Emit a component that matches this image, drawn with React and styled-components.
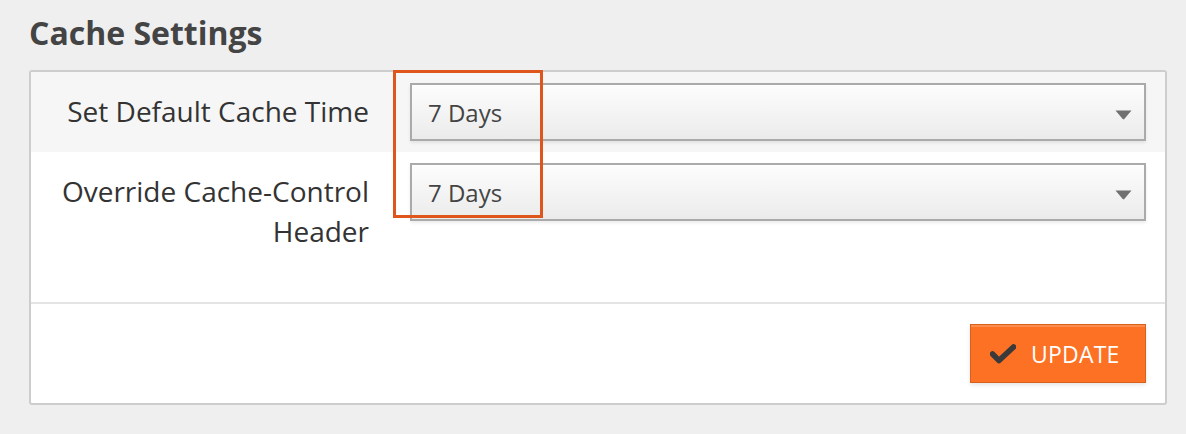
import React from "react";
import styled, { createGlobalStyle } from "styled-components";

const Global = createGlobalStyle`
  html, body { margin: 0; padding: 0; }
  body {
    background: #efefef;
    font-family: "Open Sans", "Liberation Sans", sans-serif;
    color: #333;
  }
`;

const Page = styled.div`
  position: relative;
  padding: 12px 19px 28px 29px;
`;

const Title = styled.h2`
  margin: 0 0 17px 0;
  font-size: 32px;
  font-weight: 700;
  line-height: 41px;
  color: #444;
`;

const Panel = styled.div`
  background: #fff;
  border: 2px solid #cdcdcd;
  border-radius: 3px;
`;

const Row = styled.div`
  display: flex;
  align-items: flex-start;
  padding-right: 19px;
  background: ${(p) => (p.$shaded ? "#f6f6f6" : "#fff")};
  padding-bottom: ${(p) => p.$extra || 0}px;
`;

const Label = styled.div`
  width: 338px;
  flex: none;
  text-align: right;
  font-size: 28px;
  line-height: 40px;
  color: #333;
  padding: 19px 0 21px 0;
`;

const Field = styled.div`
  flex: 1;
  margin-left: 41px;
  padding-top: 11px;
`;

const SelectBox = styled.div`
  position: relative;
  height: 54px;
  border: 2px solid #aaa;
  background: linear-gradient(#fdfdfd, #ebebeb);
  box-shadow: 0 2px 3px rgba(0, 0, 0, 0.08), inset 0 1px 0 #fff;
  display: flex;
  align-items: center;
  padding: 0 16px;
  font-size: 24px;
  color: #444;
`;

const Arrow = styled.svg`
  position: absolute;
  right: 12px;
  top: 25px;
`;

const Divider = styled.div`
  height: 2px;
  background: #e4e4e4;
`;

const Footer = styled.div`
  display: flex;
  justify-content: flex-end;
  padding: 20px 19px 20px 0;
`;

const Button = styled.button`
  width: 176px;
  height: 59px;
  display: flex;
  align-items: center;
  justify-content: flex-start;
  gap: 15px;
  padding: 0 0 0 19px;
  background: #fd7125;
  border: 1px solid #d8601d;
  box-shadow: inset 0 2px 0 #fd8b4c, 0 2px 4px rgba(0, 0, 0, 0.1);
  color: #fff;
  font-family: "Open Sans", "Liberation Sans", sans-serif;
  font-size: 23px;
  letter-spacing: 0.2px;
  cursor: pointer;
`;

const Highlight = styled.div`
  position: absolute;
  left: 393px;
  top: 70px;
  width: 144px;
  height: 142px;
  border: 3px solid #df561c;
  pointer-events: none;
`;

function Select({ value }) {
  return (
    <SelectBox>
      {value}
      <Arrow width="17" height="10" viewBox="0 0 17 10">
        <path d="M0.5 0.5 H16.5 L9.5 8.8 Q8.5 9.8 7.5 8.8 Z" fill="#707070" />
      </Arrow>
    </SelectBox>
  );
}

function Check() {
  return (
    <svg width="26" height="21" viewBox="0 0 26 21">
      <path
        d="M2.5 11 L9 17.5 L23.5 4"
        stroke="#3a3a3a"
        strokeWidth="5.6"
        strokeLinecap="round"
        strokeLinejoin="round"
        fill="none"
      />
    </svg>
  );
}

export default function App() {
  return (
    <>
      <Global />
      <Page>
        <Title>Cache Settings</Title>
        <Panel>
          <Row $shaded>
            <Label>Set Default Cache Time</Label>
            <Field>
              <Select value="7 Days" />
            </Field>
          </Row>
          <Row $extra={30}>
            <Label>
              Override Cache-Control
              <br />
              Header
            </Label>
            <Field>
              <Select value="7 Days" />
            </Field>
          </Row>
          <Divider />
          <Footer>
            <Button>
              <Check />
              UPDATE
            </Button>
          </Footer>
        </Panel>
        <Highlight />
      </Page>
    </>
  );
}
